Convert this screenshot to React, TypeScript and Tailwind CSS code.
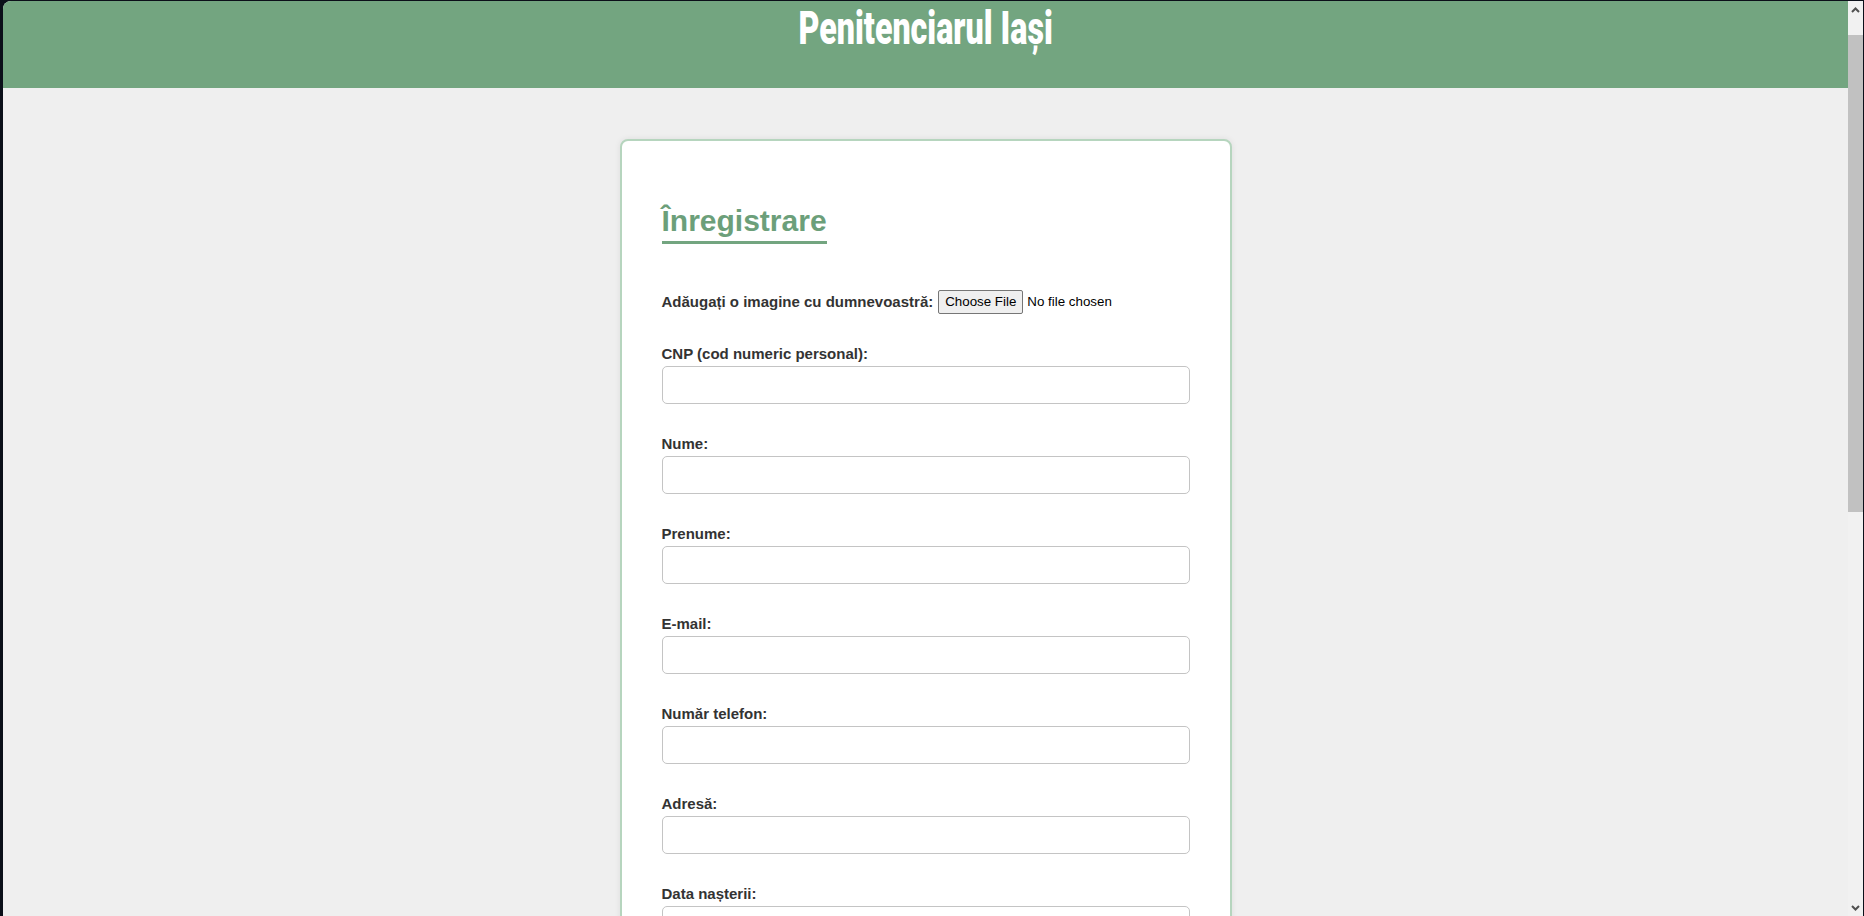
const fields = [
  "CNP (cod numeric personal):",
  "Nume:",
  "Prenume:",
  "E-mail:",
  "Număr telefon:",
  "Adresă:",
  "Data nașterii:",
];

function Chevron({ down }: { down?: boolean }) {
  return (
    <svg width="9" height="6" viewBox="0 0 9 6" className={down ? "rotate-180" : ""}>
      <path d="M1 5 L4.5 1.5 L8 5" fill="none" stroke="#505050" strokeWidth="2" />
    </svg>
  );
}

export default function App() {
  return (
    <div className="flex h-[916px] w-[1864px] overflow-hidden bg-[#0b0f19] pt-[1px] pl-[3px] pr-[1px] font-['Liberation_Sans',Arial,sans-serif]">
      <div className="flex flex-1 overflow-hidden rounded-tl-[8px] bg-[#efefef]">
        {/* page */}
        <div className="flex-1 overflow-hidden">
          <header className="h-[87px] bg-[#73a580] text-center">
            <h1 className="inline-block scale-x-[0.7] font-['Roboto',sans-serif] text-[46px] leading-[54px] font-black text-white">
              Penitenciarul Iași
            </h1>
          </header>

          <main className="mx-auto mt-[51px] w-[612px] rounded-[8px] border-2 border-[#b6d5be] bg-white px-[40px] pt-[63px] pb-10 shadow-[0_0_6px_rgba(0,0,0,0.08)]">
            <h2 className="mb-[47px] inline-block border-b-[3px] border-[#73a580] pb-[3px] text-[30px] leading-[34px] font-bold text-[#6c9f7a]">
              Înregistrare
            </h2>

            <div className="mb-[32px] flex h-[22px] items-center text-[15px] whitespace-nowrap text-[#333]">
              <label htmlFor="poza" className="mr-[5px] shrink-0 font-bold">
                Adăugați o imagine cu dumnevoastră:
              </label>
              <input
                id="poza"
                type="file"
                className="min-w-0 text-[13.33px] text-black file:mr-[4px] file:rounded-[2px] file:border file:border-[#767676] file:bg-[#efefef] file:px-[6px] file:py-[1px] file:text-black"
              />
            </div>

            {fields.map((f) => (
              <div key={f} className="mb-[31px]">
                <label className="mb-[4px] block text-[15px] leading-[17px] font-bold text-[#333]">{f}</label>
                <input
                  type="text"
                  className="block h-[38px] w-full rounded-[5px] border border-[#c4c4c4] px-3 text-[15px]"
                />
              </div>
            ))}
          </main>
        </div>

        {/* scrollbar */}
        <div className="flex w-[15px] flex-col rounded-tr-[6px] bg-[#f1f1f1]">
          <div className="flex h-[17px] items-center justify-center">
            <Chevron />
          </div>
          <div className="mt-[17px] h-[477px] bg-[#c1c1c1]" />
          <div className="flex-1" />
          <div className="flex h-[17px] items-center justify-center">
            <Chevron down />
          </div>
        </div>
      </div>
    </div>
  );
}
